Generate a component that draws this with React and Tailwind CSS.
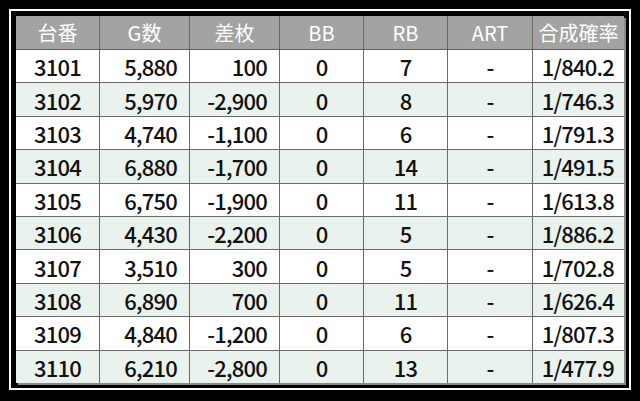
import React from "react";

const rows = [
  ["3101", "5,880", "100", "0", "7", "-", "1/840.2"],
  ["3102", "5,970", "-2,900", "0", "8", "-", "1/746.3"],
  ["3103", "4,740", "-1,100", "0", "6", "-", "1/791.3"],
  ["3104", "6,880", "-1,700", "0", "14", "-", "1/491.5"],
  ["3105", "6,750", "-1,900", "0", "11", "-", "1/613.8"],
  ["3106", "4,430", "-2,200", "0", "5", "-", "1/886.2"],
  ["3107", "3,510", "300", "0", "5", "-", "1/702.8"],
  ["3108", "6,890", "700", "0", "11", "-", "1/626.4"],
  ["3109", "4,840", "-1,200", "0", "6", "-", "1/807.3"],
  ["3110", "6,210", "-2,800", "0", "13", "-", "1/477.9"],
];

const headers = ["台番", "G数", "差枚", "BB", "RB", "ART", "合成確率"];
const widths = ["w-[84px]", "w-[90px]", "w-[90px]", "w-[84px]", "w-[84px]", "w-[85px]", "w-[91px]"];
const aligns = [
  "justify-center",
  "justify-end pr-[12px]",
  "justify-end pr-[12px]",
  "justify-center",
  "justify-center",
  "justify-center",
  "justify-end pr-[10px]",
];

export default function App() {
  return (
    <div
      className="w-[640px] h-[401px] bg-black pt-[9px] pl-[9px]"
      style={{ fontFamily: '"Noto Sans CJK JP", "Noto Sans", sans-serif' }}
    >
      <div className="w-[622px] h-[381px] border-2 border-white p-[5px]">
        <div className="w-[608px] h-[367px] flex flex-col bg-white shadow-[2px_2px_0_#8a8a8a]">
          <div className="h-[34px] flex bg-[#a3a3a3] border-b border-[#5e5e5e]">
            {headers.map((h, i) => (
              <div
                key={i}
                className={`${widths[i]} flex items-center justify-center text-white text-[20px] leading-none ${i < 6 ? "border-r border-[#6a6a6a]" : ""}`}
              >
                {h}
              </div>
            ))}
          </div>
          {rows.map((r, ri) => (
            <div
              key={ri}
              className={`flex-1 flex ${ri % 2 === 1 ? "bg-[#e9f2ec]" : "bg-white"} ${ri < 9 ? "border-b border-[#6a6a6a]" : ""}`}
            >
              {r.map((c, ci) => (
                <div
                  key={ci}
                  className={`${widths[ci]} flex items-center ${aligns[ci]} text-[22px] leading-none font-medium text-[#111] tracking-[-0.8px] ${ci < 6 ? "border-r border-[#6a6a6a]" : ""}`}
                >
                  {c}
                </div>
              ))}
            </div>
          ))}
        </div>
      </div>
    </div>
  );
}
